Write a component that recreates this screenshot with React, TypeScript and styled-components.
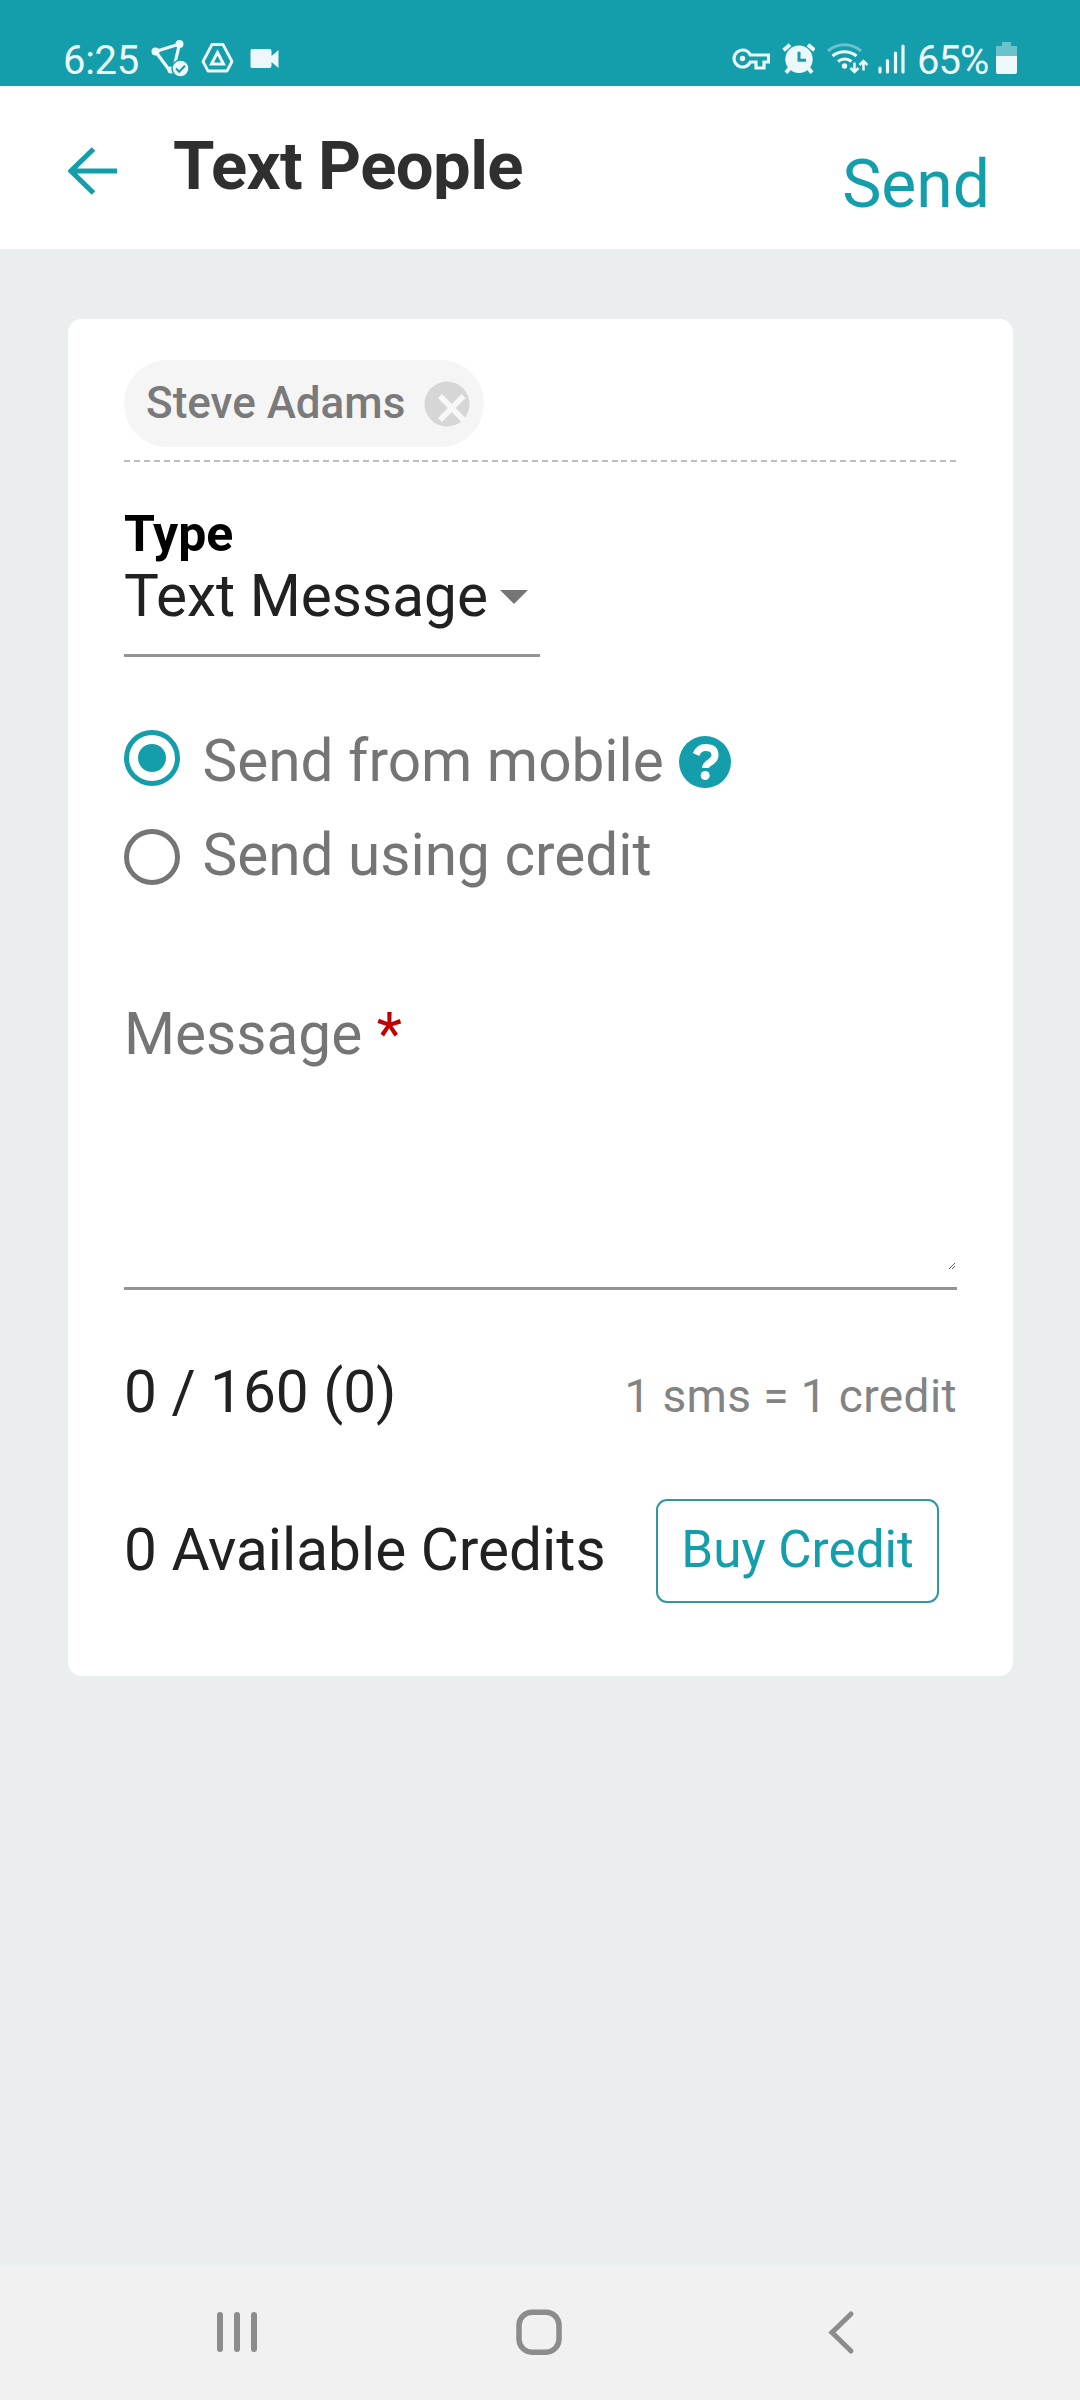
import React from "react";
import styled, { createGlobalStyle } from "styled-components";

const teal = "#149eac";
const pale = "#ecf8fa";

const GlobalStyle = createGlobalStyle`
  * { box-sizing: border-box; }
  body { margin: 0; background: #eaeeef; font-family: Roboto, "Liberation Sans", sans-serif; }
  button { font: inherit; border: 0; padding: 0; background: none; }
`;

const Screen = styled.div`
  width: 1080px;
  height: 2400px;
  display: flex;
  flex-direction: column;
  background: #eaeeef;
`;

const StatusBar = styled.div`
  height: 86px;
  padding: 38px 63px 0 63px;
  display: flex;
  justify-content: space-between;
  background: ${teal};
  color: ${pale};
`;

const StatusGroup = styled.div<{ $gap: number }>`
  display: flex;
  gap: ${(p) => p.$gap}px;
  height: 40px;
`;

const StatusText = styled.span<{ $width: number; $spacing?: number }>`
  width: ${(p) => p.$width}px;
  font-size: 40px;
  line-height: 45px;
  white-space: nowrap;
  letter-spacing: ${(p) => p.$spacing ?? 0}px;
`;

const Glyph = styled.svg`
  display: block;
  flex: none;
`;

const Header = styled.header`
  height: 163px;
  padding: 0 90px 0 68px;
  display: flex;
  align-items: flex-start;
  background: #fff;
`;

const BackButton = styled.button`
  width: 50px;
  height: 50px;
  margin-top: 60px;
`;

const Title = styled.h1`
  flex: 1;
  height: 73px;
  margin: 40px 0 0 55px;
  overflow: hidden;
  font-size: 67px;
  line-height: 80px;
  font-weight: 700;
  letter-spacing: -0.6px;
  color: #2f2f2f;
`;

const SendButton = styled.button`
  margin-top: 59px;
  font-size: 66px !important;
  line-height: 80px !important;
  color: ${teal};
`;

const Main = styled.main`
  flex: 1;
  padding: 70px 67px 0 68px;
`;

const Card = styled.section`
  display: flex;
  flex-direction: column;
  height: 1357px;
  padding: 41px 56px 0;
  border-radius: 14px;
  background: #fff;
`;

const Recipients = styled.div`
  height: 102px;
  background: repeating-linear-gradient(to right, #bdbdbd 0 6px, transparent 6px 9.95px) left bottom / 100% 2px no-repeat;
`;

const Chip = styled.div`
  width: 360px;
  height: 87px;
  padding: 0 14px 0 22px;
  display: flex;
  align-items: center;
  justify-content: space-between;
  border-radius: 44px;
  background: #f5f5f5;
  color: #7a7a7a;
  font-size: 44px;
  font-weight: 500;
`;

const ChipName = styled.span`
  margin-bottom: 2px;
`;

const FieldLabel = styled.label`
  margin-top: 42px;
  font-size: 50px;
  font-weight: 700;
  line-height: 60px;
  color: #000;
`;

const Body = styled.span<{ $color?: string; $top?: number; $bottom?: number }>`
  margin-top: ${(p) => p.$top ?? 0}px;
  margin-bottom: ${(p) => p.$bottom ?? 0}px;
  font-size: 58.5px;
  line-height: 60px;
  white-space: nowrap;
  color: ${(p) => p.$color ?? "#212121"};
`;

const Select = styled.div`
  width: 416px;
  height: 91px;
  margin-top: 2px;
  padding-right: 12px;
  display: flex;
  justify-content: space-between;
  border-bottom: 3px solid #949494;
`;

const Caret = styled.span`
  width: 28px;
  height: 14px;
  margin-top: 24px;
  background: #757575;
  clip-path: polygon(0 0, 100% 0, 50% 100%);
`;

const RadioGroup = styled.div`
  display: flex;
  flex-direction: column;
  gap: 39px;
  margin-top: 73px;
`;

const RadioRow = styled.div`
  display: flex;
  align-items: center;
  height: 56px;
`;

const RadioDot = styled.span<{ $on?: boolean }>`
  width: 56px;
  height: 56px;
  margin: ${(p) => (p.$on ? "0" : "8px")} 22.5px 0 0;
  border: 5px solid ${(p) => (p.$on ? teal : "#757575")};
  border-radius: 50%;
  display: grid;
  place-items: center;
  &::after {
    content: "";
    width: 28px;
    height: 28px;
    border-radius: 50%;
    background: ${(p) => (p.$on ? teal : "transparent")};
  }
`;

const Help = styled.svg`
  margin: 7px 0 0 auto;
`;

const RadioLabel = styled.div`
  width: 528.5px;
  height: 56px;
  display: flex;
  align-items: center;
`;

const MessageField = styled.div`
  height: 286px;
  margin-top: 123px;
  display: flex;
  align-items: flex-start;
  border-bottom: 3px solid #949494;
`;

const ResizeGrip = styled.svg`
  margin: auto 2px 18px auto;
`;

const CounterRow = styled.div`
  height: 60px;
  margin-top: 72px;
  display: flex;
  justify-content: space-between;
  align-items: baseline;
`;

const Rate = styled.span`
  font-size: 46px;
  line-height: 50px;
  letter-spacing: 0.4px;
  color: #838383;
`;

const CreditsRow = styled.div`
  height: 104px;
  margin-top: 77px;
  padding-right: 18px;
  display: flex;
  justify-content: space-between;
  align-items: center;
`;

const BuyButton = styled.button`
  width: 283px;
  height: 104px;
  padding-bottom: 4px;
  border: 2px solid #2f97a3;
  border-radius: 11px;
  color: ${teal};
  font-size: 51.2px !important;
  white-space: nowrap;
`;

const NavBar = styled.nav`
  height: 135px;
  padding: 43px 225px 0 216px;
  display: flex;
  justify-content: space-between;
  background: #f1f1f1;
`;

const HomeGlyph = styled(Glyph)`
  margin-right: 8px;
`;

export default function App() {
  return (
    <Screen>
      <GlobalStyle />
      <StatusBar>
        <StatusGroup $gap={12}>
          <StatusText $width={76} $spacing={-0.3}>6:25</StatusText>
          <Glyph width="38" height="40" viewBox="151 38 38 40">
            <path d="M155.5 51.5 179.5 44 175 63M155.5 51.5 170 71" fill="none" stroke={pale} strokeWidth="3.2" />
            <circle cx="155.5" cy="51.5" r="4" fill={pale} />
            <circle cx="179.5" cy="44" r="4" fill={pale} />
            <circle cx="171" cy="70" r="3.5" fill={pale} />
            <circle cx="180.5" cy="68.5" r="8.5" fill={pale} stroke={teal} strokeWidth="1.4" />
            <path d="m176 68.5 3.2 3.3 5.8-6" fill="none" stroke={teal} strokeWidth="2" />
          </Glyph>
          <Glyph width="34" height="40" viewBox="201 38 34 40">
            <path d="M212 44.5h11l9 17-5 9.5h-19l-5-9.5z" fill="none" stroke={pale} strokeWidth="2.8" strokeLinejoin="round" />
            <path d="m217.5 52.5 6 11.5h-12z" fill="none" stroke={pale} strokeWidth="3" />
          </Glyph>
          <Glyph width="33" height="40" viewBox="247 38 33 40">
            <path d="M252 49h17.5a2 2 0 0 1 2 2v5l7-6v18l-7-6v4a2 2 0 0 1-2 2H252a1.5 1.5 0 0 1-1.5-1.5v-16A1.5 1.5 0 0 1 252 49z" fill={pale} />
          </Glyph>
        </StatusGroup>
        <StatusGroup $gap={10}>
          <Glyph width="39" height="40" viewBox="730 37.5 39 40">
            <path d="M741.5 49.5a8.5 8.5 0 1 0 7.8 12H755v6h8v-6h4.5v-7h-18.2a8.5 8.5 0 0 0-7.8-5z" fill="none" stroke={pale} strokeWidth="3.2" />
            <circle cx="741.5" cy="58" r="2.7" fill={pale} />
          </Glyph>
          <Glyph width="35" height="40" viewBox="779 37.3 35 40">
            <circle cx="798" cy="58.5" r="13.7" fill={pale} />
            <path d="m782.5 49.5 6.5-5.5M813.5 49.5l-6.5-5.5" stroke={pale} strokeWidth="4" />
            <path d="m789 67-4 5M807 67l4 5" stroke={pale} strokeWidth="4" />
            <path d="M798 51v8.500h7" fill="none" stroke={teal} strokeWidth="3" />
          </Glyph>
          <Glyph width="43" height="40" viewBox="825 37.5 43 40">
            <path d="M828 50.5a25 25 0 0 1 33 0" fill="none" stroke={pale} strokeWidth="3" opacity=".4" />
            <path d="M832.5 55.5a19 19 0 0 1 24 0M838 61a10.5 10.5 0 0 1 13.5 0" fill="none" stroke={pale} strokeWidth="3" />
            <circle cx="844.5" cy="65.5" r="2.7" fill={pale} />
            <path d="M854.5 62v9M850.5 67.5l4 4 4-4M863.5 70v-9M859.5 64.5l4-4 4 4" fill="none" stroke={pale} strokeWidth="2.5" />
          </Glyph>
          <Glyph width="29" height="40" viewBox="876.5 38 29 40">
            <path d="M878.5 68v4M886 60.5V72M894 53v19M901.5 46v26" stroke={pale} strokeWidth="3.2" strokeLinecap="round" />
          </Glyph>
          <StatusText $width={69} $spacing={-1}>65%</StatusText>
          <Glyph width="21" height="40" viewBox="996 38 21 40">
            <path d="M1002 42h9v4h6v11h-21V46h6z" fill={pale} opacity=".4" />
            <path d="M996 56h21v16a2 2 0 0 1-2 2h-17a2 2 0 0 1-2-2z" fill={pale} />
          </Glyph>
        </StatusGroup>
      </StatusBar>

      <Header>
        <BackButton aria-label="Back">
          <Glyph width="50" height="50" viewBox="0 0 50 50">
            <path d="M49 25H4M25.5 3 3 25l22.500 22" fill="none" stroke={teal} strokeWidth="5.2" />
          </Glyph>
        </BackButton>
        <Title>Text People</Title>
        <SendButton>Send</SendButton>
      </Header>

      <Main>
        <Card>
          <Recipients>
            <Chip>
              <ChipName>Steve Adams</ChipName>
              <Glyph width="46" height="46" viewBox="0 0 46 46">
                <circle cx="23" cy="23" r="22.5" fill="#d6d6d6" />
                <path d="M16 15l23.500 24M39.500 15l-23.500 24" stroke="#f8f8f8" strokeWidth="5.6" />
              </Glyph>
            </Chip>
          </Recipients>

          <FieldLabel>Type</FieldLabel>
          <Select>
            <Body>Text Message</Body>
            <Caret />
          </Select>

          <RadioGroup>
            <RadioRow>
              <RadioDot $on />
              <RadioLabel>
                <Body $color="#757575" $top={6}>Send from mobile</Body>
                <Help width="52" height="52" viewBox="0 0 52 52">
                  <circle cx="26" cy="26" r="26" fill={teal} />
                  <path d="M17 18.5Q20 11.500 26.500 11.500q9.500 0 9.500 7.500 0 4-4.500 7-5 3-5 6" fill="none" stroke="#fff" strokeWidth="7" />
                  <circle cx="26.2" cy="39.5" r="4.5" fill="#fff" />
                </Help>
              </RadioLabel>
            </RadioRow>
            <RadioRow>
              <RadioDot />
              <Body $color="#757575" $top={4}>Send using credit</Body>
            </RadioRow>
          </RadioGroup>

          <MessageField>
            <Body $color="#757575">
              Message <Body $color="#c00000">*</Body>
            </Body>
            <ResizeGrip width="6" height="6" viewBox="0 0 6 6">
              <path d="M0 5.5h1M1 4.5h1M2 3.5h1M3 2.5h1M4 1.5h1M5 .5h1M3 5.5h1M4 4.5h1M5 3.5h1" stroke="#606060" shapeRendering="crispEdges" />
            </ResizeGrip>
          </MessageField>

          <CounterRow>
            <Body>0 / 160 (0)</Body>
            <Rate>1 sms = 1 credit</Rate>
          </CounterRow>

          <CreditsRow>
            <Body $bottom={2}>0 Available Credits</Body>
            <BuyButton>Buy Credit</BuyButton>
          </CreditsRow>
        </Card>
      </Main>

      <NavBar>
        <Glyph width="42" height="48" viewBox="0 0 42 48">
          <path d="M4 6v34M21 6v34M38 6v34" transform="translate(0 1)" stroke="#8c8c8c" strokeWidth="6" strokeLinecap="round" />
        </Glyph>
        <HomeGlyph width="46" height="48" viewBox="0 0 46 48">
          <rect x="3" y="4.2" width="40" height="40" rx="13" fill="none" stroke="#8c8c8c" strokeWidth="5.5" />
        </HomeGlyph>
        <Glyph width="27" height="48" viewBox="0 0 27 48">
          <path d="M23 6 4 24.500 23 43" fill="none" stroke="#8c8c8c" strokeWidth="5" strokeLinecap="round" />
        </Glyph>
      </NavBar>
    </Screen>
  );
}
